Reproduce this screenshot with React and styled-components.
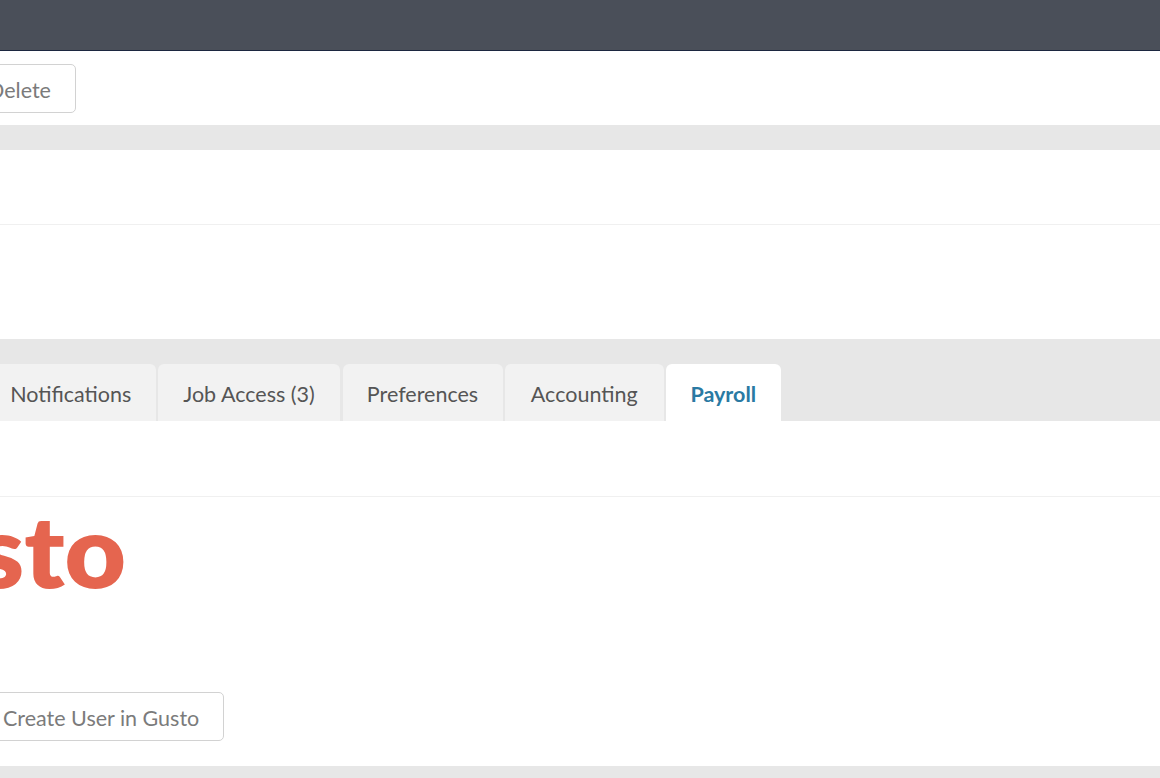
import React from "react";
import styled, { createGlobalStyle } from "styled-components";

const Global = createGlobalStyle`
  html, body { margin: 0; padding: 0; background: #fff; overflow: hidden; }
  body { font-family: Lato, "Open Sans", sans-serif; }
`;

const Page = styled.div`
  width: 1160px;
  height: 778px;
  overflow: hidden;
  display: flex;
  flex-direction: column;
`;

const TopBar = styled.div`
  height: 50px;
  flex: none;
  background: #4a4f59;
  border-bottom: 1px solid #1c2740;
`;

const Section = styled.div`
  flex: none;
  height: ${(p) => p.$h}px;
  background: #fff;
  box-sizing: border-box;
  border-bottom: ${(p) => (p.$line ? "1px solid #f0f0f0" : "none")};
`;

const Toolbar = styled(Section)`
  display: flex;
  align-items: center;
  padding-top: 1px;
`;

const Band = styled.div`
  flex: none;
  height: ${(p) => p.$h}px;
  background: #e7e7e7;
`;

const Button = styled.button`
  box-sizing: border-box;
  height: 49px;
  margin-left: ${(p) => p.$left}px;
  padding: 2px 24px 0;
  background: #fff;
  border: 1px solid #d2d2d2;
  border-radius: 5px;
  color: #7b7b7b;
  font-family: inherit;
  font-size: 21.5px;
  white-space: nowrap;
`;

const TabBand = styled.div`
  flex: none;
  height: 82px;
  box-sizing: border-box;
  padding-top: 25px;
  background: #e7e7e7;
  display: flex;
  gap: 2.5px;
`;

const Tab = styled.div`
  box-sizing: border-box;
  height: 57px;
  flex: none;
  width: ${(p) => p.$w}px;
  margin-left: ${(p) => p.$left || 0}px;
  padding-top: 2px;
  display: flex;
  align-items: center;
  justify-content: center;
  border-radius: 6px 6px 0 0;
  background: ${(p) => (p.$active ? "#fff" : "#f2f2f2")};
  color: ${(p) => (p.$active ? "#2a7aa3" : "#555")};
  font-size: 21.5px;
  font-weight: ${(p) => (p.$active ? 700 : 400)};
`;

const LogoRow = styled.div`
  flex: none;
  height: 269px;
  background: #fff;
  display: flex;
  flex-direction: column;
  align-items: flex-start;
`;

const Logo = styled.div`
  height: 108px;
  margin-left: -143px;
  font-weight: 800;
  font-size: 100px;
  line-height: 104px;
  color: #e5654f;
  transform: scaleX(1.06);
  transform-origin: 100% 50%;
`;

const ActionRow = styled.div`
  margin-top: 87px;
`;

export default function App() {
  return (
    <Page>
      <Global />
      <TopBar />
      <Toolbar $h={74}>
        <Button $left={-37}>Delete</Button>
      </Toolbar>
      <Band $h={25} />
      <Section $h={75} $line />
      <Section $h={114} />
      <TabBand>
        <Tab $w={169.5} $left={-14}>Notifications</Tab>
        <Tab $w={182}>Job Access (3)</Tab>
        <Tab $w={160}>Preferences</Tab>
        <Tab $w={158.5}>Accounting</Tab>
        <Tab $w={114.5} $active>Payroll</Tab>
      </TabBand>
      <Section $h={76} $line />
      <LogoRow>
        <Logo>Gusto</Logo>
        <ActionRow>
          <Button $left={-22}>Create User in Gusto</Button>
        </ActionRow>
      </LogoRow>
      <Band $h={12} />
    </Page>
  );
}
